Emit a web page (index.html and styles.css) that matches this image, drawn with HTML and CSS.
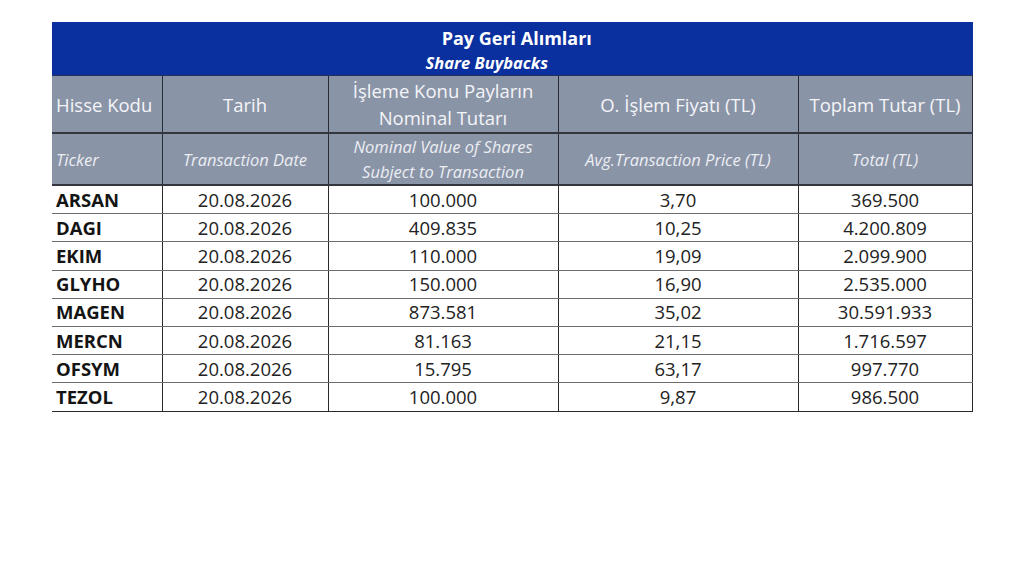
FILE: index.html
```html
<!DOCTYPE html>
<html lang="tr">
<head>
<meta charset="utf-8">
<title>Pay Geri Alımları</title>
<link rel="stylesheet" href="styles.css">
</head>
<body>
<table class="buybacks">
  <colgroup>
    <col class="c1"><col class="c2"><col class="c3"><col class="c4"><col class="c5">
  </colgroup>
  <thead>
    <tr class="title-row">
      <th colspan="5">
        <div class="title">Pay Geri Alımları</div>
        <div class="subtitle">Share Buybacks</div>
      </th>
    </tr>
    <tr class="head-tr">
      <th class="left">Hisse Kodu</th>
      <th>Tarih</th>
      <th>İşleme Konu Payların<br>Nominal Tutarı</th>
      <th>O. İşlem Fiyatı (TL)</th>
      <th>Toplam Tutar (TL)</th>
    </tr>
    <tr class="head-en">
      <th class="left">Ticker</th>
      <th>Transaction Date</th>
      <th>Nominal Value of Shares<br>Subject to Transaction</th>
      <th>Avg.Transaction Price (TL)</th>
      <th>Total (TL)</th>
    </tr>
  </thead>
  <tbody>
    <tr><td class="tick">ARSAN</td><td>20.08.2026</td><td>100.000</td><td>3,70</td><td>369.500</td></tr>
    <tr><td class="tick">DAGI</td><td>20.08.2026</td><td>409.835</td><td>10,25</td><td>4.200.809</td></tr>
    <tr><td class="tick">EKIM</td><td>20.08.2026</td><td>110.000</td><td>19,09</td><td>2.099.900</td></tr>
    <tr><td class="tick">GLYHO</td><td>20.08.2026</td><td>150.000</td><td>16,90</td><td>2.535.000</td></tr>
    <tr><td class="tick">MAGEN</td><td>20.08.2026</td><td>873.581</td><td>35,02</td><td>30.591.933</td></tr>
    <tr><td class="tick">MERCN</td><td>20.08.2026</td><td>81.163</td><td>21,15</td><td>1.716.597</td></tr>
    <tr><td class="tick">OFSYM</td><td>20.08.2026</td><td>15.795</td><td>63,17</td><td>997.770</td></tr>
    <tr><td class="tick">TEZOL</td><td>20.08.2026</td><td>100.000</td><td>9,87</td><td>986.500</td></tr>
  </tbody>
</table>
</body>
</html>
```

FILE: styles.css
```css
html, body {
  margin: 0;
  padding: 0;
  background: #ffffff;
}

body {
  font-family: "Open Sans", "Noto Sans", sans-serif;
  color: #1e1e1e;
}

.buybacks {
  margin: 22px 0 0 52px;
  width: 920px;
  table-layout: fixed;
  border-collapse: collapse;
}

.c1 { width: 110px; }
.c2 { width: 166px; }
.c3 { width: 230px; }
.c4 { width: 240px; }
.c5 { width: 174px; }

.title-row th {
  height: 50px;
  padding: 3px 0 0;
  vertical-align: top;
  background: #0a2f9f;
  color: #ffffff;
  text-align: center;
  border-right: 1px solid #0a2f9f;
  border-bottom: 1px solid #27325a;
}

.title {
  font-size: 18px;
  font-weight: 700;
  line-height: 26px;
  padding-left: 10px;
}

.subtitle {
  font-size: 16.5px;
  font-weight: 700;
  font-style: italic;
  line-height: 24px;
  padding-right: 50px;
}

.head-tr th,
.head-en th {
  background: #8a94a7;
  color: #f4f5f8;
  font-weight: 400;
  text-align: center;
  padding: 0 2px;
  border-left: 1px solid #2a2d35;
  border-right: 1px solid #2a2d35;
}

.head-tr th:first-child,
.head-en th:first-child {
  border-left: none;
}

.head-tr th {
  height: 56px;
  font-size: 18.5px;
  line-height: 27px;
  border-bottom: 2px solid #33363e;
}

.head-en th {
  height: 50px;
  font-size: 16.5px;
  font-style: italic;
  font-weight: 500;
  line-height: 25px;
  color: #eceef3;
  border-bottom: 2px solid #33363e;
}

.buybacks th.left {
  text-align: left;
  padding-left: 4px;
}

.buybacks td {
  height: 27.2px;
  padding: 0 2px;
  font-size: 18.5px;
  line-height: 22px;
  text-align: center;
  color: #222222;
  border-left: 1px solid #2a2a2a;
  border-right: 1px solid #2a2a2a;
  border-bottom: 1px solid #6d6d6d;
}

.buybacks tbody tr:last-child td {
  border-bottom: 1px solid #2a2a2a;
}

.buybacks td.tick {
  text-align: left;
  padding-left: 4px;
  font-weight: 700;
  border-left: none;
  color: #141414;
}
```
